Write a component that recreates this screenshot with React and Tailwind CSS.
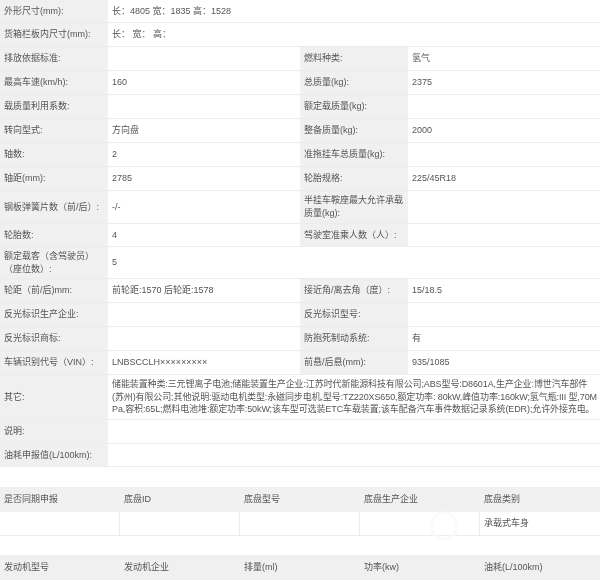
const FONT = "font-['Liberation_Sans','Noto_Sans_CJK_SC',sans-serif]";

const otherLines = [
  "储能装置种类:三元锂离子电池;储能装置生产企业:江苏时代新能源科技有限公司;ABS型号:D8601A,生产企业:博世汽车部件",
  "(苏州)有限公司;其他说明:驱动电机类型:永磁同步电机,型号:TZ220XS650,额定功率: 80kW,峰值功率:160kW;氢气瓶:III 型,70M",
  "Pa,容积:65L;燃料电池堆:额定功率:50kW;该车型可选装ETC车载装置;该车配备汽车事件数据记录系统(EDR);允许外接充电。",
];

const rows = [
  { h: "h-[23px]", wide: ["外形尺寸(mm):", "长：4805 宽：1835 高：1528"] },
  { h: "h-[24px]", wide: ["货箱栏板内尺寸(mm):", "长：  宽：  高："] },
  { h: "h-[24px]", cells: ["排放依据标准:", "", "燃料种类:", "氢气"] },
  { h: "h-[24px]", cells: ["最高车速(km/h):", "160", "总质量(kg):", "2375"] },
  { h: "h-[24px]", cells: ["载质量利用系数:", "", "额定载质量(kg):", ""] },
  { h: "h-[24px]", cells: ["转向型式:", "方向盘", "整备质量(kg):", "2000"] },
  { h: "h-[24px]", cells: ["轴数:", "2", "准拖挂车总质量(kg):", ""] },
  { h: "h-[24px]", cells: ["轴距(mm):", "2785", "轮胎规格:", "225/45R18"] },
  { h: "h-[33px]", cells: ["钢板弹簧片数（前/后）:", "-/-", "半挂车鞍座最大允许承载质量(kg):", ""] },
  { h: "h-[23px]", cells: ["轮胎数:", "4", "驾驶室准乘人数（人）:", ""] },
  { h: "h-[32px]", wide: ["额定载客（含驾驶员）（座位数）:", "5"] },
  { h: "h-[24px]", cells: ["轮距（前/后)mm:", "前轮距:1570 后轮距:1578", "接近角/离去角（度）:", "15/18.5"] },
  { h: "h-[24px]", cells: ["反光标识生产企业:", "", "反光标识型号:", ""] },
  { h: "h-[24px]", cells: ["反光标识商标:", "", "防抱死制动系统:", "有"] },
  { h: "h-[24px]", cells: ["车辆识别代号（VIN）:", "LNBSCCLH×××××××××", "前悬/后悬(mm):", "935/1085"] },
  {
    h: "h-[45px]",
    wide: [
      "其它:",
      <div className="whitespace-nowrap tracking-[-0.11px]">
        {otherLines.map((line) => (
          <div key={line}>{line}</div>
        ))}
      </div>,
    ],
  },
  { h: "h-[24px]", wide: ["说明:", ""] },
  { h: "h-[23px]", wide: ["油耗申报值(L/100km):", ""] },
];

function Label({ children }) {
  return (
    <div className="w-[108px] shrink-0 flex items-center bg-[#f0f0f0] pl-[4px] pr-[2px] leading-[13px]">
      {children}
    </div>
  );
}

function Value({ children, className = "" }) {
  return (
    <div className={`flex items-center bg-white pl-[4px] pr-[1px] leading-[12.5px] ${className}`}>
      {children}
    </div>
  );
}

function SpecRow({ row }) {
  return (
    <div className={`flex border-b border-[#ececec] ${row.h}`}>
      {row.wide ? (
        <>
          <Label>{row.wide[0]}</Label>
          <Value className="flex-1">{row.wide[1]}</Value>
        </>
      ) : (
        <>
          <Label>{row.cells[0]}</Label>
          <Value className="w-[192px] shrink-0">{row.cells[1]}</Value>
          <Label>{row.cells[2]}</Label>
          <Value className="flex-1">{row.cells[3]}</Value>
        </>
      )}
    </div>
  );
}

function FiveColTable({ heads, values }) {
  return (
    <div>
      <div className="grid grid-cols-5 h-[25px] bg-[#f0f0f0]">
        {heads.map((t) => (
          <div key={t} className="flex items-center pl-[4px]">
            {t}
          </div>
        ))}
      </div>
      {values && (
        <div className="grid grid-cols-5 h-[24px] border-b border-[#ececec]">
          {values.map((t, i) => (
            <div key={i} className="flex items-center pl-[4px] border-r border-[#ececec] last:border-r-0">
              {t}
            </div>
          ))}
        </div>
      )}
    </div>
  );
}

export default function App() {
  return (
    <div className={`${FONT} relative w-[600px] h-[581px] overflow-hidden bg-white text-[9px] text-[#555555] blur-[0.35px]`}>
      {rows.map((row, i) => (
        <SpecRow key={i} row={row} />
      ))}
      <div className="h-[20px]" />
      <FiveColTable
        heads={["是否同期申报", "底盘ID", "底盘型号", "底盘生产企业", "底盘类别"]}
        values={["", "", "", "", "承载式车身"]}
      />
      <div className="h-[19px]" />
      <FiveColTable heads={["发动机型号", "发动机企业", "排量(ml)", "功率(kw)", "油耗(L/100km)"]} />
      {/* faint watermark over the chassis row */}
      <svg className="absolute left-[428px] top-[510px]" width="32" height="32" viewBox="0 0 32 32" fill="none">
        <circle cx="16" cy="16" r="13" stroke="#fbfbfb" strokeWidth="3" />
      </svg>
    </div>
  );
}
